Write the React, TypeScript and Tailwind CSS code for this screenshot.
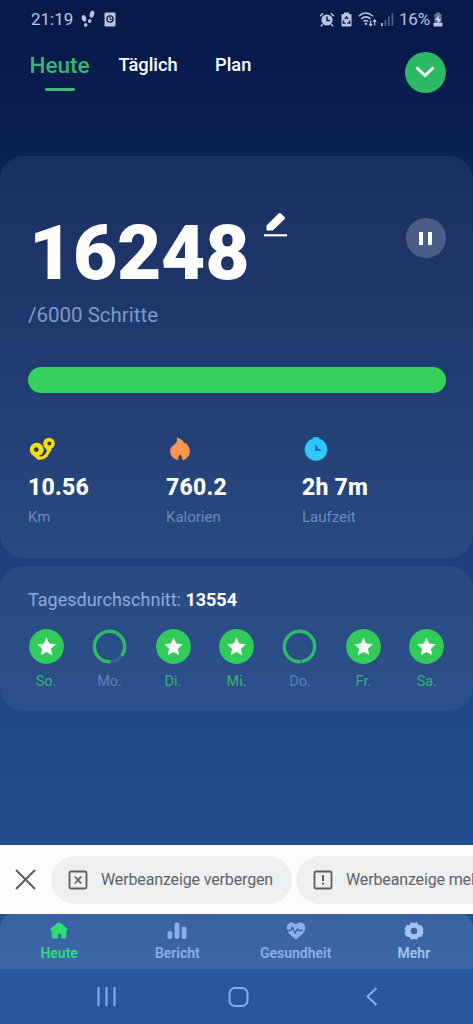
import React from 'react';

const days = [
  { label: 'So.', progress: 1 },
  { label: 'Mo.', progress: 0.86 },
  { label: 'Di.', progress: 1 },
  { label: 'Mi.', progress: 1 },
  { label: 'Do.', progress: 0.98 },
  { label: 'Fr.', progress: 1 },
  { label: 'Sa.', progress: 1 },
];

const StatusBar = () => (
  <div className="flex h-[38px] shrink-0 items-center justify-between pl-[31px] pr-[30px] text-[#b9c4e4]">
    <div className="flex items-center">
      <span className="w-[43px] text-[17px] leading-[20px] whitespace-nowrap">21:19</span>
      <svg width="14" height="18" viewBox="0 0 14 18" fill="currentColor" className="ml-[7px]">
        <ellipse cx="3" cy="8.3" rx="2.2" ry="3.4" transform="rotate(-14 3 8.3)" />
        <ellipse cx="4.7" cy="14.9" rx="1.7" ry="1.9" />
        <ellipse cx="11" cy="4.2" rx="2.2" ry="3.7" transform="rotate(16 11 4.2)" />
        <ellipse cx="8.7" cy="11" rx="1.7" ry="2" transform="rotate(16 8.7 11)" />
      </svg>
      <svg width="12" height="15" viewBox="0 0 12 15" className="ml-[9px]">
        <rect x="0.5" y="0.5" width="11" height="14" rx="1.2" fill="currentColor" />
        <circle cx="6" cy="7" r="3.1" fill="#c6cee8" stroke="#0a1c4e" strokeWidth="1.3" />
        <path d="M6 5v2.2h1.8" fill="none" stroke="#0a1c4e" strokeWidth="1.1" />
      </svg>
    </div>
    <div className="flex items-center">
      {/* alarm */}
      <svg width="16" height="15" viewBox="0 0 16 15" fill="none" stroke="currentColor">
        <circle cx="8" cy="8" r="5.6" fill="currentColor" stroke="none" />
        <path d="M8 4.500v4h3" stroke="#0a1c4e" strokeWidth="1.500" />
        <path d="M1.2 4.2 4 1.3M14.8 4.2 12 1.3M3.6 12.2 2 14.2M12.4 12.2l1.6 2" strokeWidth="1.6" />
      </svg>
      {/* power saving */}
      <svg width="11" height="15" viewBox="0 0 11 15" className="ml-[6px]">
        <path d="M3 .5h5V2h1.500q1 0 1 1v10.500q0 1-1 1h-8q-1 0-1-1V3q0-1 1-1H3z" fill="currentColor" />
        <path d="M3.800 7 5.500 4.800 7.200 7M2.600 8.500l-.4 2.600h2.400M8.400 8.500l.4 2.600H6.300" fill="none" stroke="#0a1c4e" strokeWidth="1.300" />
      </svg>
      {/* wifi */}
      <svg width="19" height="16" viewBox="0 0 19 16" fill="none" stroke="currentColor" strokeWidth="1.500" className="ml-[6px]">
        <path d="M.8 5.200q6.900-6.500 14.200 0M3.200 8q4.700-4.300 9.400 0M5.500 10.500q2.400-2 4.800 0" />
        <circle cx="7.900" cy="12.700" r="1.300" fill="currentColor" stroke="none" />
        <path d="M12.700 9.500v5M11.200 13l1.500 1.700 1.500-1.700M16.700 14.500V9M15.200 10.700l1.500-1.700 1.500 1.700" strokeWidth="1.200" />
      </svg>
      {/* signal */}
      <svg width="13" height="13" viewBox="0 0 13 13" fill="#4d5b86" className="ml-[4px]">
        <rect x="0" y="10" width="1.800" height="3" fill="#b9c4e4" />
        <rect x="3.500" y="7" width="1.800" height="6" />
        <rect x="7" y="3.500" width="1.800" height="9.500" />
        <rect x="10.500" y="0" width="1.800" height="13" />
      </svg>
      <span className="ml-[5px] w-[33px] text-[17px] leading-[20px] tracking-[-0.2px] whitespace-nowrap">16%</span>
      <svg width="10" height="15" viewBox="0 0 10 15" className="ml-px">
        <path d="M3 .5h4V2h1.500v9H1.500V2H3z" fill="#6372a0" />
        <path d="M.5 11h9v3.500h-9z" fill="currentColor" />
        <path d="M6 3 2.500 8H5l-.8 4L8 7H5.500z" fill="#dbe2f7" />
      </svg>
    </div>
  </div>
);

const Header = () => (
  <div className="flex h-[118px] shrink-0 items-start pl-[29px] pr-[27.500px] font-medium text-white">
    <div className="flex w-[61px] flex-col items-center pt-[14px]">
      <span className="text-[22.500px] leading-[26px] text-[#36b870]">Heute</span>
      <span className="mt-[10px] h-[3px] w-[30px] rounded-full bg-[#40b878]" />
    </div>
    <span className="ml-[28.500px] w-[61px] pt-[15px] text-[18.300px] leading-[24px] whitespace-nowrap">Täglich</span>
    <span className="ml-[35.500px] pt-[15px] text-[18.300px] leading-[24px]">Plan</span>
    <button className="mt-[13.500px] ml-auto flex size-[41px] items-center justify-center rounded-full bg-[#2bba63]">
      <svg width="20" height="12" viewBox="0 0 20 12" fill="none" stroke="#fff" strokeWidth="3">
        <path d="M1.500 1.500 10 9.500l8.500-8" />
      </svg>
    </button>
  </div>
);

const DistanceIcon = () => (
  <svg width="26" height="24" viewBox="0 0 26 24">
    <path d="M4 14.500 9.500 21q4 .8 7.500-2.300l4.500-7.200" fill="none" stroke="#f6dd12" strokeWidth="3.200" strokeLinejoin="round" />
    <circle cx="7.700" cy="12.600" r="6.900" fill="#f6dd12" />
    <path d="m2 16.500 7 6.200 5.500-6z" fill="#f6dd12" />
    <circle cx="20" cy="6.500" r="5.800" fill="#f6dd12" />
    <path d="m15 9 3.500 5.500L24 10z" fill="#f6dd12" />
    <path d="M10.500 18.800q5-.3 5.500-5" fill="none" stroke="#343c40" strokeWidth="1.500" />
    <circle cx="7.300" cy="12.600" r="2.400" fill="#343c40" />
    <circle cx="20.300" cy="6.500" r="2" fill="#343c40" />
  </svg>
);

const FlameIcon = () => (
  <svg width="20" height="23" viewBox="0 0 20 23">
    <path
      d="M7 .3c3.200 1.300 6 3.300 7.600 6.200l1-.8c2.200 2.300 3.900 4.700 3.900 7.800 0 4.300-2.700 7.500-6.400 8.800-1.200-.6-1.300-2.400-1.600-4.300l-1.300-1.200c-1.600 1.300-2 3.300-1.600 5.500C4 21.500.5 18 .5 13.500c0-3.500 2.400-5 4.700-6.800C7 5 7.700 2.800 7 .3z"
      fill="#fb9650"
    />
  </svg>
);

const ClockIcon = () => (
  <svg width="22" height="23" viewBox="0 0 22 23">
    <path d="M8 .2h6v3H8z" fill="#2fc7fb" />
    <circle cx="11" cy="12" r="10.800" fill="#2fc7fb" />
    <path d="M10.300 7v6.200H16z" fill="#17649c" />
    <path d="M12.500 7.500v3.700H16z" fill="#2fc7fb" />
  </svg>
);

const stats = [
  { value: '10.56', label: 'Km', icon: <DistanceIcon />, width: 'w-[138px]' },
  { value: '760.2', label: 'Kalorien', icon: <FlameIcon />, width: 'w-[136px]' },
  { value: '2h 7m', label: 'Laufzeit', icon: <ClockIcon />, width: 'w-[120px]' },
];

const StepsCard = () => (
  <section className="flex h-[402px] shrink-0 flex-col rounded-[24px] bg-linear-to-b from-[#1a2f61] via-[#203b6f] to-[#294a82] pl-[28px] pr-[27px] pt-[54px]">
    <div className="flex h-[84px] items-start">
      <span className="w-[236px] pt-px pl-px text-[76.500px] leading-[84px] font-black tracking-[-0.3px] text-white">16248</span>
      <svg width="24" height="26" viewBox="0 0 24 26" fill="#fff" className="mt-[2px]">
        <path d="M2.500 13.500 14.600 1.500q1.200-1.200 2.400 0l3.500 3.500q1 1.100 0 2.200L8.700 18.600H2.500z" />
        <rect x="0" y="22.200" width="23" height="2.200" />
      </svg>
      <button className="mt-[8px] mr-[0.500px] ml-auto flex size-[40px] items-center justify-center gap-[5px] rounded-full bg-[#4a5d89]">
        <span className="h-[13px] w-[4px] bg-white" />
        <span className="h-[13px] w-[4px] bg-white" />
      </button>
    </div>
    <p className="mt-[9px] text-[20.500px] leading-[24px] text-[#7f98c6]">/6000 Schritte</p>
    <div className="mt-[40px] h-[26px] shrink-0 rounded-full bg-[#36d05c]" />
    <div className="mt-[44px] flex">
      {stats.map((stat) => (
        <div key={stat.label} className={stat.width}>
          <div className="flex h-[24px] items-center pl-[0.700px] *:h-[24px] *:w-[26px]">{stat.icon}</div>
          <p className="mt-[13px] text-[23px] leading-[28px] font-extrabold tracking-[0.2px] text-white">{stat.value}</p>
          <p className="mt-[5px] text-[15px] leading-[20px] text-[#6f8abd]">{stat.label}</p>
        </div>
      ))}
    </div>
  </section>
);

const DayBadge = ({ progress }: { progress: number }) => {
  if (progress >= 1) {
    return (
      <svg width="35" height="35" viewBox="0 0 35 35">
        <circle cx="17.500" cy="17.500" r="17.400" fill="#31cb5a" />
        <path
          d="m17.500 8.500 2.700 6 6.600.7-4.900 4.500 1.400 6.500-5.800-3.300-5.800 3.300 1.400-6.500-4.900-4.500 6.600-.7z"
          fill="#fff"
        />
      </svg>
    );
  }
  const length = 2 * Math.PI * 15.2;
  return (
    <svg width="35" height="35" viewBox="0 0 35 35" fill="none" strokeWidth="3.400">
      <circle cx="17.500" cy="17.500" r="15.200" stroke="#3b5f96" />
      <circle
        cx="17.500"
        cy="17.500"
        r="15.200"
        stroke="#2bbd66"
        strokeDasharray={`${length * progress} ${length}`}
        transform="rotate(86 17.500 17.500)"
      />
    </svg>
  );
};

const AverageCard = () => (
  <section className="mt-[8px] h-[145px] shrink-0 rounded-[24px] bg-linear-to-b from-[#2a4a82] to-[#2c508c] pt-[22px]">
    <p className="pl-[28px] text-[18px] leading-[24px] text-[#8ea9df]">
      Tagesdurchschnitt: <span className="font-bold text-white">13554</span>
    </p>
    <div className="mt-[17px] flex justify-between pl-[28.600px] pr-[28.600px]">
      {days.map((day) => (
        <div key={day.label} className="flex w-[35px] flex-col items-center">
          <DayBadge progress={day.progress} />
          <span
            className={`mt-[8px] text-[14.500px] leading-[20px] ${day.progress >= 1 ? 'text-[#2fb870]' : 'text-[#5f7fb9]'}`}
          >
            {day.label}
          </span>
        </div>
      ))}
    </div>
  </section>
);

const AdBar = () => (
  <div className="flex h-[69px] shrink-0 items-center overflow-hidden bg-[#fdfdfc] pl-[15px] text-[16px] tracking-[-0.140px] text-[#5f6368]">
    <svg width="21" height="21" viewBox="0 0 21 21" fill="none" stroke="#5b5c5e" strokeWidth="2" className="shrink-0">
      <path d="m1 1 19 19M20 1 1 20" />
    </svg>
    <div className="ml-[15px] flex h-[48px] w-[241px] shrink-0 items-center rounded-full bg-[#eeeff1] pl-[17px]">
      <svg width="20" height="20" viewBox="0 0 20 20" fill="none" stroke="#5b5e63" strokeWidth="1.800">
        <rect x="1.500" y="1.500" width="17" height="17" rx="1.500" />
        <path d="m6.800 6.500 6.400 7M13.200 6.500l-6.400 7" />
      </svg>
      <span className="ml-[13px] leading-[22px] whitespace-nowrap">Werbeanzeige verbergen</span>
    </div>
    <div className="ml-[4px] flex h-[48px] w-[241px] shrink-0 items-center rounded-full bg-[#eeeff1] pl-[17px]">
      <svg width="20" height="20" viewBox="0 0 20 20" fill="none" stroke="#5b5e63" strokeWidth="1.800">
        <rect x="1.500" y="1.500" width="17" height="17" rx="1.500" />
        <path d="M10 5v6M10 12.700v2" strokeWidth="2" />
      </svg>
      <span className="ml-[13px] leading-[22px] whitespace-nowrap">Werbeanzeige melden</span>
    </div>
  </div>
);

const tabs = [
  {
    label: 'Heute',
    color: 'text-[#2ede76]',
    icon: (
      <path d="M10 1.500q.8 0 1.500.6l6.500 5.100q.8.700.6 1.600-.3.900-1.300.900V16q0 1.500-1.500 1.500h-3.600V14q0-1-1-1H10q-1 0-1 1v3.500H4.200q-1.500 0-1.500-1.500V9.700q-1 0-1.300-.9-.2-.9.600-1.600l6.500-5.100q.7-.6 1.500-.6z" />
    ),
  },
  {
    label: 'Bericht',
    color: 'text-[#8caee8]',
    icon: (
      <>
        <rect x="0.500" y="10" width="4.800" height="8" rx="2" />
        <rect x="7.600" y="1.500" width="4.800" height="16.500" rx="2" />
        <rect x="14.700" y="5.500" width="4.800" height="12.500" rx="2" />
      </>
    ),
  },
  {
    label: 'Gesundheit',
    color: 'text-[#8caee8]',
    icon: (
      <>
        <path d="M10 18.500C4 14 .7 11 .7 6.800.7 1.200 7-.3 10 3.700c3-4 9.300-2.500 9.300 3.100 0 4.200-3.300 7.200-9.300 11.700z" />
        <path d="M.5 9.500h4l2-3 2.500 5.500 2.500-4 1.500 1.500h3.500" fill="none" stroke="#3b63a5" strokeWidth="1.400" />
      </>
    ),
  },
  {
    label: 'Mehr',
    color: 'text-[#a5c3f1]',
    icon: (
      <path
        fillRule="evenodd"
        d="M7 1.300q3 1.500 6 0l1.500 2.800 3 .2 2 3.700q-1.800 2 0 4l-2 3.700-3 .2-1.500 2.800q-3-1.500-6 0l-1.500-2.800-3-.2-2-3.700q1.800-2 0-4l2-3.700 3-.2zM10 6.700a3.300 3.300 0 1 0 0 6.600 3.300 3.300 0 0 0 0-6.600z"
      />
    ),
  },
];

const TabBar = () => (
  <nav className="h-[55px] shrink-0 bg-[#245092]">
    <div className="flex h-full rounded-t-[14px] bg-linear-to-b from-[#3a62a5] to-[#3d67a9]">
      {tabs.map((tab) => (
        <div key={tab.label} className={`flex flex-1 flex-col items-center pt-[7px] ${tab.color}`}>
          <svg width="20" height="20" viewBox="0 0 20 20" fill="currentColor">
            {tab.icon}
          </svg>
          <span className="mt-[3px] text-[14px] leading-[18px] font-semibold">{tab.label}</span>
        </div>
      ))}
    </div>
  </nav>
);

const SystemNav = () => (
  <div className="flex h-[55px] shrink-0 items-center bg-[#27589b] pl-[97px]">
    <svg width="19" height="19" viewBox="0 0 19 19" stroke="#86aeea" strokeWidth="2">
      <path d="M1.500 0v19M9.500 0v19M17.500 0v19" />
    </svg>
    <svg width="21" height="20" viewBox="0 0 21 20" fill="none" stroke="#86aeea" strokeWidth="2" className="ml-[112px]">
      <rect x="1.500" y="1" width="18" height="18" rx="5.500" />
    </svg>
    <svg width="12" height="19" viewBox="0 0 12 19" fill="none" stroke="#86aeea" strokeWidth="2" className="ml-[117px]">
      <path d="M10.500 1 1.500 9.500l9 8.500" />
    </svg>
  </div>
);

const App = () => (
  <div className="flex h-[1024px] w-full flex-col overflow-hidden bg-linear-to-b from-[#081a4b] from-5% via-[#1d3f7d] via-55% to-[#28589d] font-['Roboto',sans-serif]">
    <StatusBar />
    <Header />
    <StepsCard />
    <AverageCard />
    <div className="flex-1" />
    <AdBar />
    <TabBar />
    <SystemNav />
  </div>
);

export default App;
